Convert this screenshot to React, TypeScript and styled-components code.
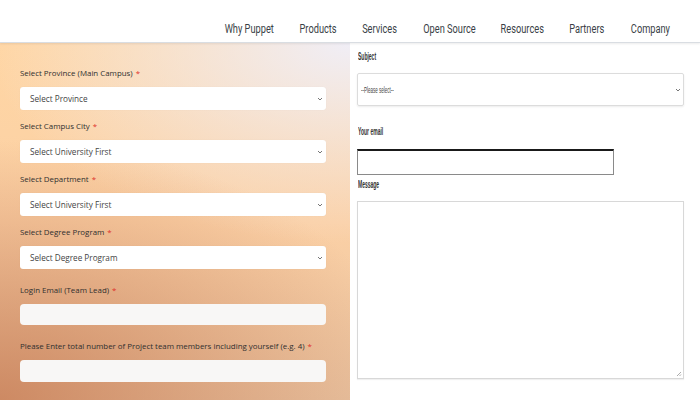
import React from "react";
import styled, { createGlobalStyle } from "styled-components";

const GlobalStyle = createGlobalStyle`
  html, body {
    margin: 0;
    padding: 0;
    background: #fff;
  }
  body {
    width: 700px;
    height: 400px;
    overflow: hidden;
  }
`;

const Page = styled.div`
  width: 700px;
  height: 400px;
  display: flex;
  flex-direction: column;
  overflow: hidden;
`;

const Header = styled.header`
  height: 43px;
  flex: none;
  display: flex;
  justify-content: flex-end;
  align-items: center;
  gap: 27px;
  padding: 2px 31px 0 0;
  box-sizing: border-box;
  background: #fff;
  border-bottom: 1px solid #d9dde2;
  box-shadow: 0 1px 2px rgba(0, 0, 0, 0.08);
  position: relative;
  z-index: 1;
`;

// the site uses a condensed face; squeeze Roboto into the measured box
const NavLink = styled.a<{ $w: number }>`
  width: ${(p) => p.$w}px;
  display: flex;
  justify-content: center;
  padding-top: 12px;
  text-decoration: none;
  white-space: nowrap;
`;

const NavText = styled.span`
  display: inline-block;
  font-family: "Roboto", sans-serif;
  font-size: 12.5px;
  color: #3a3f47;
  transform: scaleX(0.74);
`;

const Main = styled.main`
  flex: 1;
  display: flex;
  min-height: 0;
`;

const LeftPanel = styled.section`
  width: 350px;
  flex: none;
  box-sizing: border-box;
  padding: 24px 24px 0 20px;
  display: flex;
  flex-direction: column;
  background:
    radial-gradient(ellipse 420px 260px at 0% 100%, rgba(196, 118, 78, 0.75), rgba(196, 118, 78, 0) 100%),
    radial-gradient(ellipse 360px 200px at 100% 0%, rgba(240, 238, 246, 1), rgba(240, 238, 246, 0) 100%),
    linear-gradient(180deg, #ffd6a4 0%, #fbd0a5 50%, #e9c4a2 100%);
`;

const Field = styled.div<{ $spaced?: boolean }>`
  display: flex;
  flex-direction: column;
  margin-top: ${(p) => (p.$spaced ? "15px" : "10px")};
  &:first-child {
    margin-top: 0;
  }
`;

const Label = styled.label`
  font-family: "Open Sans", sans-serif;
  font-size: 7.9px;
  line-height: 12px;
  color: #2f2f2f;
  margin-bottom: 8px;
  white-space: nowrap;
`;

const Star = styled.span`
  color: #e0302a;
  margin-left: 3px;
`;

const SelectBox = styled.div`
  height: 23px;
  box-sizing: border-box;
  background: #fff;
  border-radius: 3px;
  box-shadow: 0 0 1px rgba(0, 0, 0, 0.08);
  display: flex;
  align-items: center;
  justify-content: space-between;
  padding: 0 3px 0 10px;
  font-family: "Open Sans", sans-serif;
  font-size: 8.2px;
  color: #444;
`;

const Chevron = styled.svg`
  width: 6px;
  height: 6px;
`;

const TextInput = styled.div<{ $h: number }>`
  height: ${(p) => p.$h}px;
  background: #f8f7f6;
  border-radius: 4px;
`;

const RightPanel = styled.section`
  flex: 1;
  background: #fff;
  box-sizing: border-box;
  padding: 8px 16px 0 7px;
  display: flex;
  flex-direction: column;
`;

const RLabel = styled.div<{ $gap: number; $after: number }>`
  font-family: "Liberation Sans", sans-serif;
  font-size: 10px;
  line-height: 12px;
  font-weight: bold;
  color: #333;
  transform: scaleX(0.5);
  transform-origin: left center;
  margin: ${(p) => p.$gap}px 0 ${(p) => p.$after}px 1px;
  white-space: nowrap;
`;

const RSelect = styled.div`
  height: 33px;
  box-sizing: border-box;
  border: 1px solid #dcdcdc;
  border-radius: 2px;
  box-shadow: 0 1px 2px rgba(0, 0, 0, 0.08);
  display: flex;
  align-items: center;
  justify-content: space-between;
  padding: 0 2px 0 3px;
`;

const Squeezed = styled.span`
  font-family: "Liberation Sans", sans-serif;
  font-size: 9px;
  color: #444;
  transform: scaleX(0.5);
  transform-origin: left center;
`;

const REmail = styled.div`
  width: 257px;
  height: 26px;
  box-sizing: border-box;
  border: 1px solid #8a8a8a;
  border-top: 2px solid #1a1a1a;
`;

const RTextarea = styled.div`
  height: 178px;
  box-sizing: border-box;
  border: 1px solid #d8d8d8;
  box-shadow: 0 1px 1px rgba(0, 0, 0, 0.06);
  position: relative;
`;

const Grip = styled.svg`
  position: absolute;
  right: 1px;
  bottom: 1px;
  width: 6px;
  height: 6px;
`;

const ChevronDown = () => (
  <Chevron viewBox="0 0 6 6">
    <path d="M1 2 L3 4 L5 2" fill="none" stroke="#666" strokeWidth="0.9" />
  </Chevron>
);

const selects = [
  { label: "Select Province (Main Campus)", value: "Select Province" },
  { label: "Select Campus City", value: "Select University First" },
  { label: "Select Department", value: "Select University First" },
  { label: "Select Degree Program", value: "Select Degree Program" },
];

const navItems = [
  { name: "Why Puppet", w: 47 },
  { name: "Products", w: 36 },
  { name: "Services", w: 34 },
  { name: "Open Source", w: 51 },
  { name: "Resources", w: 41 },
  { name: "Partners", w: 34 },
  { name: "Company", w: 38 },
];

export default function App() {
  return (
    <Page>
      <GlobalStyle />
      <Header>
        {navItems.map((n) => (
          <NavLink key={n.name} $w={n.w}>
            <NavText>{n.name}</NavText>
          </NavLink>
        ))}
      </Header>
      <Main>
        <LeftPanel>
          {selects.map((s) => (
            <Field key={s.label}>
              <Label>
                {s.label}
                <Star>*</Star>
              </Label>
              <SelectBox>
                <span>{s.value}</span>
                <ChevronDown />
              </SelectBox>
            </Field>
          ))}
          <Field $spaced>
            <Label>
              Login Email (Team Lead)
              <Star>*</Star>
            </Label>
            <TextInput $h={21} />
          </Field>
          <Field $spaced>
            <Label>
              Please Enter total number of Project team members including yourself (e.g. 4)
              <Star>*</Star>
            </Label>
            <TextInput $h={22} />
          </Field>
        </LeftPanel>
        <RightPanel>
          <RLabel $gap={0} $after={10}>Subject</RLabel>
          <RSelect>
            <Squeezed>--Please select--</Squeezed>
            <ChevronDown />
          </RSelect>
          <RLabel $gap={20} $after={11}>Your email</RLabel>
          <REmail />
          <RLabel $gap={4} $after={10}>Message</RLabel>
          <RTextarea>
            <Grip viewBox="0 0 6 6">
              <path d="M5 1 L1 5 M5 3.5 L3.5 5" stroke="#888" strokeWidth="0.7" />
            </Grip>
          </RTextarea>
        </RightPanel>
      </Main>
    </Page>
  );
}
